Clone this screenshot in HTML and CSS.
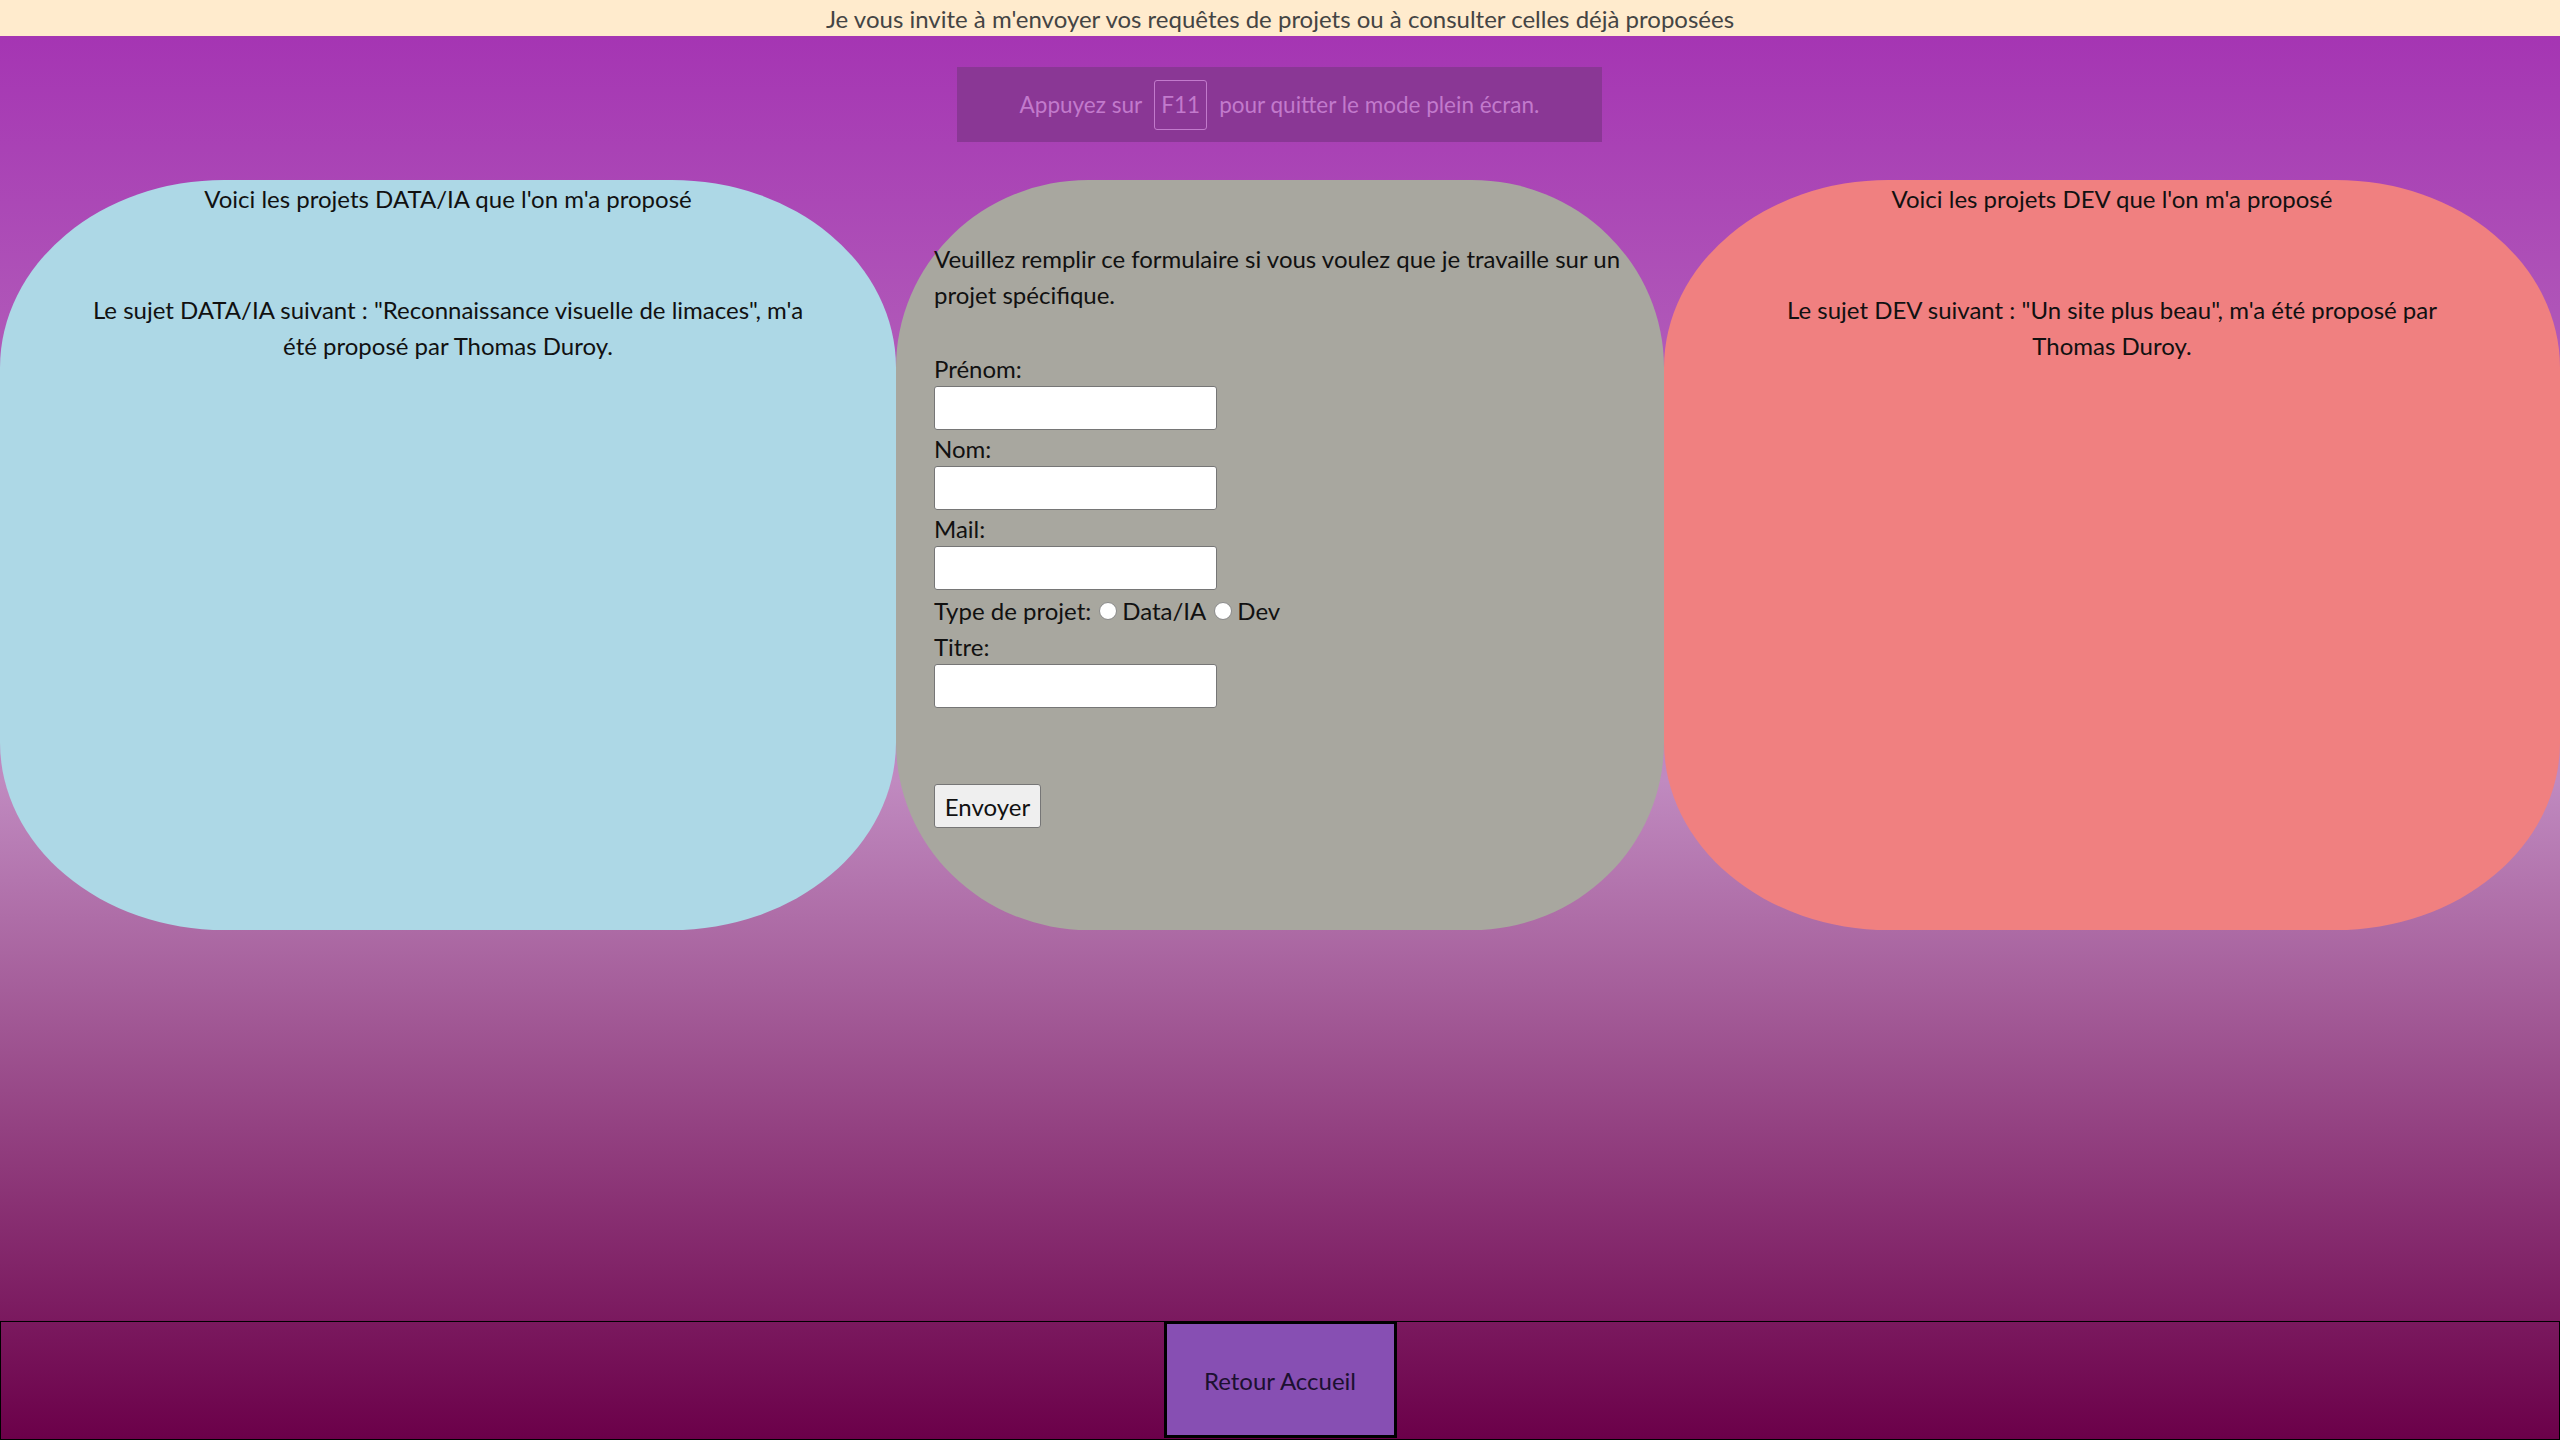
FILE: index.html
```html
<!DOCTYPE html>
<html lang="fr">
<head>
<meta charset="utf-8">
<title>Projets</title>
<link rel="stylesheet" href="styles.css">
</head>
<body>
<header class="topbar">Je vous invite à m'envoyer vos requêtes de projets ou à consulter celles déjà proposées</header>
<main class="panels">
  <section class="panel panel-data">
    <h2 class="panel-title">Voici les projets DATA/IA que l'on m'a proposé</h2>
    <p class="proposal">Le sujet DATA/IA suivant : "Reconnaissance visuelle de limaces", m'a été proposé par Thomas Duroy.</p>
  </section>
  <section class="panel panel-form">
    <p class="intro">Veuillez remplir ce formulaire si vous voulez que je travaille sur un projet spécifique.</p>
    <form class="form">
      <label class="field-label" for="prenom">Prénom:</label>
      <input class="field" id="prenom" type="text">
      <label class="field-label" for="nom">Nom:</label>
      <input class="field" id="nom" type="text">
      <label class="field-label" for="mail">Mail:</label>
      <input class="field" id="mail" type="text">
      <div class="radio-row"><span>Type de projet:</span><input class="radio" type="radio" name="type" id="t-data"><label for="t-data">Data/IA</label><input class="radio" type="radio" name="type" id="t-dev"><label for="t-dev">Dev</label></div>
      <label class="field-label" for="titre">Titre:</label>
      <input class="field" id="titre" type="text">
      <button class="send" type="button">Envoyer</button>
    </form>
  </section>
  <section class="panel panel-dev">
    <h2 class="panel-title">Voici les projets DEV que l'on m'a proposé</h2>
    <p class="proposal">Le sujet DEV suivant : "Un site plus beau", m'a été proposé par Thomas Duroy.</p>
  </section>
</main>
<footer class="footer"><a class="home" href="#">Retour Accueil</a></footer>
<div class="fs-bubble"><span>Appuyez sur</span><kbd class="key">F11</kbd><span>pour quitter le mode plein écran.</span></div>
</body>
</html>
```
FILE: styles.css
```css
html, body {
  margin: 0;
  padding: 0;
}

body {
  min-height: 100vh;
  display: flex;
  flex-direction: column;
  font-family: Lato, "Open Sans", sans-serif;
  font-size: 24px;
  line-height: 36px;
  color: #111;
  background: linear-gradient(to bottom, #a332b2 0px, #a535b3 36px, #c08ac0 780px, #6b0049 1440px);
}

.topbar {
  height: 36px;
  box-sizing: border-box;
  padding-top: 1px;
  line-height: 35px;
  background: #ffebcd;
  color: #444;
  text-align: center;
}

.panels {
  display: grid;
  grid-template-columns: 35% 30% 35%;
  height: 750px;
  margin-top: 144px;
}

.panel {
  border-radius: 25%;
  box-sizing: border-box;
}

.panel-data { background: #add8e6; }
.panel-form { background: #a8a79f; padding: 61px 20px 0 38px; }
.panel-dev { background: #f08080; }

.panel-title {
  margin: 0;
  padding-top: 1px;
  font-size: inherit;
  font-weight: normal;
  line-height: 36px;
  text-align: center;
}

.proposal {
  margin: 75px 0 0;
  padding: 0 10%;
  text-align: center;
}

.intro {
  margin: 0;
}

.form {
  margin-top: 37px;
  display: flex;
  flex-direction: column;
  align-items: flex-start;
}

.field-label {
  padding-top: 1px;
  line-height: 35px;
}

.field {
  box-sizing: border-box;
  width: 283px;
  height: 44px;
  margin: 0;
  padding: 0 4px;
  border: 1px solid #767676;
  border-radius: 3px;
  background: #fff;
  font: inherit;
}

.radio-row {
  display: flex;
  align-items: center;
  box-sizing: border-box;
  height: 38px;
  padding-top: 3px;
}

.radio {
  appearance: none;
  -webkit-appearance: none;
  width: 18px;
  height: 18px;
  margin: 0 5px 0 8px;
  border: 1px solid #8a8a8a;
  border-radius: 50%;
  background: #fff;
  box-sizing: border-box;
}

.send {
  margin-top: 76px;
  box-sizing: border-box;
  width: 107px;
  height: 44px;
  padding: 2px 0 0;
  border: 1px solid #767676;
  border-radius: 3px;
  background: #efefef;
  color: #111;
  font: inherit;
}

.footer {
  margin-top: auto;
  height: 119px;
  box-sizing: border-box;
  border: 1px solid #000;
  display: flex;
  justify-content: center;
}

.home {
  margin-top: -1px;
  box-sizing: border-box;
  width: 233px;
  height: 117px;
  padding-top: 2px;
  border: 3px solid #000;
  background: #874fb3;
  color: #1c1030;
  text-decoration: none;
  display: flex;
  align-items: center;
  justify-content: center;
}

.fs-bubble {
  position: absolute;
  top: 67px;
  left: 957px;
  width: 645px;
  height: 75px;
  box-sizing: border-box;
  background: #8a3795;
  color: #c27acc;
  display: flex;
  align-items: center;
  justify-content: center;
  gap: 12px;
  font-size: 22.5px;
}

.key {
  box-sizing: border-box;
  width: 53px;
  height: 50px;
  border: 1px solid #c27acc;
  border-radius: 3px;
  display: flex;
  align-items: center;
  justify-content: center;
  font-family: inherit;
}
```
